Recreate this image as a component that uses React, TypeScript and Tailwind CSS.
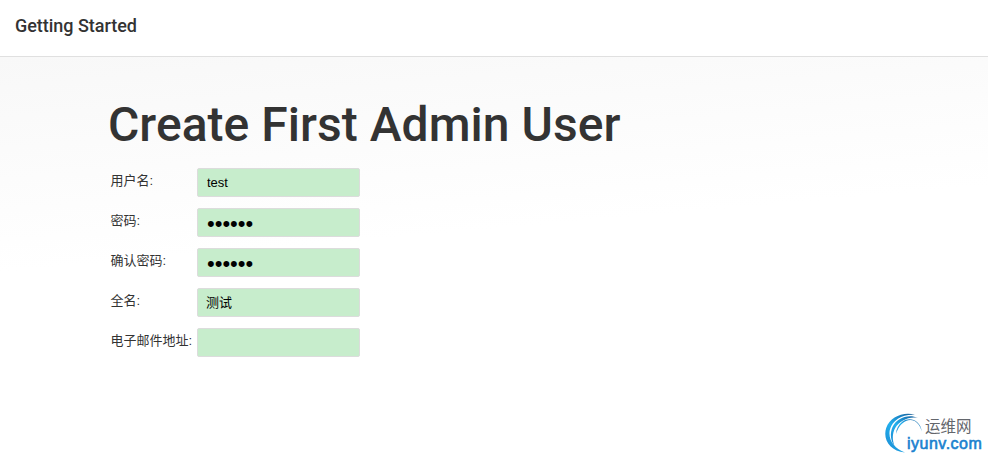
import React from "react";

type Field = { id: string; label: string; type: string; value: string; look: string };

const plain = "pb-px pl-[9px] text-[13px]";
const dots = "pl-[9px] pt-px text-[22px]";
const hanzi = "pb-[3px] pl-[8px] text-[13px]";

const fields: Field[] = [
  { id: "username", label: "用户名:", type: "text", value: "test", look: plain },
  { id: "password1", label: "密码:", type: "password", value: "123456", look: dots },
  { id: "password2", label: "确认密码:", type: "password", value: "123456", look: dots },
  { id: "fullname", label: "全名:", type: "text", value: "测试", look: hanzi },
  { id: "email", label: "电子邮件地址:", type: "text", value: "", look: plain },
];

function Swoosh() {
  return (
    <svg className="absolute left-0 top-0 h-[42px] w-[38px]" viewBox="0 0 38 42" aria-hidden="true">
      <defs>
        <linearGradient id="arc" x1="0" y1="1" x2="1" y2="0">
          <stop offset="0" stopColor="#1b86cf" />
          <stop offset="0.45" stopColor="#22b0ee" />
          <stop offset="0.7" stopColor="#1b86c8" />
          <stop offset="1" stopColor="#1d5c92" />
        </linearGradient>
      </defs>
      <path d="M30 1.800C18 -1.500 5 4 1.200 15C-2.500 26 5 38 20 39.500C9.500 35.500 2.800 27 4.800 17C7.500 6.500 18 0.800 30 1.800Z" fill="url(#arc)" />
      <path d="M33 4.800C23 0.500 11.500 5 7.500 14C4.800 20.500 5.500 27.500 9.500 33C7.200 26.500 7.200 20.500 10.200 15C14.500 7.500 24 3 33 4.800Z" fill="url(#arc)" />
      <path d="M36.800 18.500C35.500 7.500 25 3.300 17.500 8.500C13.500 11.500 11.200 16 11 21C13 15 16 10.300 21 8C28.500 4.800 34.500 10 36.800 18.500Z" fill="url(#arc)" />
    </svg>
  );
}

export default function App() {
  return (
    <div className="flex h-[460px] w-[988px] flex-col overflow-hidden bg-white font-['Roboto','Noto_Sans_CJK_SC',sans-serif] text-[#333]">
      <header className="h-[57px] shrink-0 border-b border-[#e0e0e0] px-[15px] pt-3">
        <div className="text-lg leading-7 font-medium tracking-[-0.03px]">Getting Started</div>
      </header>
      <main className="relative flex-1 bg-[linear-gradient(175deg,#f8f8f8_0%,#ffffff_44%)] pt-[36px] pl-[108px]">
        <h1 className="text-[48px] leading-[64px] font-medium tracking-[0.03px] whitespace-nowrap">Create First Admin User</h1>
        <form className="mt-[11px] flex flex-col gap-[11px] pl-[2.500px]">
          {fields.map((f) => (
            <div key={f.id} className="flex h-[29px] items-start">
              <label htmlFor={f.id} className="w-[86.500px] shrink-0 pt-[3px] font-['Liberation_Sans','Noto_Sans_CJK_SC',sans-serif] text-[13px] leading-5 whitespace-nowrap">
                {f.label}
              </label>
              <input
                id={f.id}
                type={f.type}
                defaultValue={f.value}
                className={`h-[29px] w-[163px] rounded-[2px] border border-[#dcdcdc] bg-[#c7edcc] font-['Liberation_Sans','Noto_Sans_CJK_SC',sans-serif] text-black outline-none ${f.look}`}
              />
            </div>
          ))}
        </form>
        <div className="absolute right-[5px] bottom-[5px] h-[42px] w-[98px]">
          <Swoosh />
          <div className="absolute top-[3px] left-[40px] font-['Noto_Sans_CJK_SC',sans-serif] text-[15.500px] leading-[18px] whitespace-nowrap text-[#63666c]">运维网</div>
          <div className="absolute top-[22px] left-[22px] font-['Liberation_Sans',sans-serif] text-[16px] leading-[18px] tracking-[0.500px] whitespace-nowrap text-[#1a82cf] [-webkit-text-stroke:0.6px_#1a82cf]">iyunv.com</div>
        </div>
      </main>
    </div>
  );
}
